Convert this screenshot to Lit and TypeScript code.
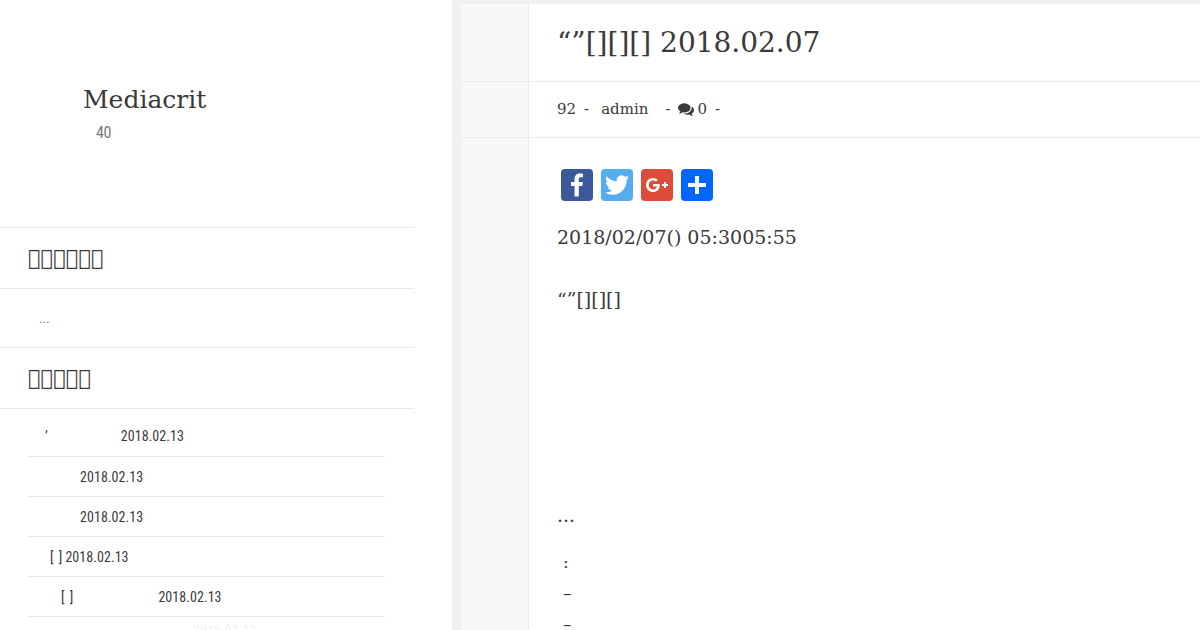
import { LitElement, html, css, svg } from "lit";
import { customElement } from "lit/decorators.js";

const TOFU = "\uE000";
const rows = [
  { pre: "’", gap: 17, date: 73 },
  { pre: "", gap: 52, date: 0 },
  { pre: "", gap: 52, date: 0 },
  { pre: "[ ]", gap: 22, date: 3 },
  { pre: "[ ]", gap: 33, date: 85 },
];
const shares = [
  { bg: "#3b5998", p: "M17.78 27.5V17.008h3.522l.527-4.09h-4.05v-2.61c0-1.182.33-1.99 2.023-1.99h2.166V4.66c-.375-.05-1.66-.16-3.155-.16-3.123 0-5.26 1.905-5.26 5.405v3.016h-3.53v4.09h3.53V27.5h4.223z" },
  { bg: "#55acee", p: "M28 8.557a9.913 9.913 0 0 1-2.828.775 4.93 4.93 0 0 0 2.166-2.725 9.738 9.738 0 0 1-3.13 1.194 4.92 4.92 0 0 0-3.593-1.55 4.924 4.924 0 0 0-4.794 6.049c-4.09-.21-7.72-2.17-10.15-5.15a4.942 4.942 0 0 0-.665 2.477c0 1.71.87 3.214 2.19 4.1a4.968 4.968 0 0 1-2.23-.616v.06c0 2.39 1.7 4.38 3.952 4.83-.414.115-.85.174-1.297.174-.318 0-.626-.03-.928-.086a4.935 4.935 0 0 0 4.6 3.42 9.893 9.893 0 0 1-6.114 2.107c-.398 0-.79-.023-1.175-.068a13.953 13.953 0 0 0 7.55 2.213c9.056 0 14.01-7.507 14.01-14.013 0-.213-.005-.426-.015-.637.96-.695 1.795-1.56 2.455-2.55z" },
  { bg: "#dd4b39", p: "M27 15h-2v-2h-2v2h-2v2h2v2h2v-2h2m-15-2v2.4h3.97c-.16 1.03-1.2 3.02-3.97 3.02-2.39 0-4.34-1.98-4.34-4.42s1.95-4.42 4.34-4.42c1.36 0 2.27.58 2.79 1.08l1.9-1.83C15.47 9.69 13.89 9 12 9c-3.87 0-7 3.13-7 7s3.13 7 7 7c4.04 0 6.72-2.84 6.72-6.84 0-.46-.05-.81-.11-1.16H12z" },
  { bg: "#0166ff", p: "M14 7h4v18h-4zM7 14h18v4H7z" },
];
const comments = "M1408 768q0 139-94 257t-256.5 186.5-353.5 68.5q-86 0-176-16-124 88-278 128-36 9-86 16h-3q-11 0-20.5-8t-11.5-21q-1-3-1-6.5t.5-6.5 2-6l2.5-5 3.5-5.5 4-5 4.5-5 4-4.5q5-6 23-25t26-29.5 22.5-29 25-38.5 20.5-44q-124-72-195-177t-71-224q0-139 94-257t256.5-186.5 353.5-68.5 353.5 68.5 256.5 186.5 94 257zm384 256q0 120-71 224.5t-195 176.5q10 24 20.5 44t25 38.5 22.5 29 26 29.5 23 25q1 1 4 4.5t4.5 5 4 5 3.5 5.5l2.5 5 2 6 .5 6.5-1 6.5q-3 14-13 22t-22 7q-50-7-86-16-154-40-278-128-90 16-176 16-271 0-472-132 58 4 88 4 161 0 309-45t264-129q125-92 192-212t67-254q0-77-23-152 129 71 204 178t75 230z";

@customElement("app-root")
export class AppRoot extends LitElement {
  static styles = css`
    :host { display: block; height: 630px; overflow: hidden; background: #f1f1f1;
      font-family: "DejaVu Serif", serif; color: #3a3a3a; }
    .page { display: grid; grid-template-columns: 452px 1fr; height: 630px; }
    .side { background: #fff; overflow: hidden; }
    .sideinner { width: 414px; }
    .brand { height: 228px; box-sizing: border-box; padding: 83px 0 0 83px; border-bottom: 1px solid #e8e8e8; }
    .brand h1 { margin: 0; font-size: 25px; line-height: 33px; font-weight: 400; color: #3a3a3a; }
    .brand p { margin: 0; padding: 7px 0 0 13px; font: 16px/20px "Roboto Condensed", "Liberation Sans Narrow", Roboto, sans-serif; letter-spacing: -.3px; color: #777; }
    .wtitle { height: 61px; box-sizing: border-box; margin: 0; padding-left: 28px; font-size: 21px; line-height: 60px; font-weight: 400; border-bottom: 1px solid #e8e8e8; }
    .teaser { height: 59px; box-sizing: border-box; padding: 21px 0 0 39px; font-size: 11px; line-height: 20px; color: #777; border-bottom: 1px solid #e8e8e8; }
    .list { padding: 8px 29px 0 28px; }
    .row { height: 40px; box-sizing: border-box; border-bottom: 1px solid #e8e8e8; font: 14px/39px "Roboto Condensed", "Liberation Sans Narrow", Roboto, sans-serif; letter-spacing: .05px; word-spacing: 2px; color: #3a3a3a; white-space: pre; }
    .row + .row { line-height: 41px; }
    .row + .row.ghost { color: #f0f0f0; border: 0; line-height: 28px; }
    .main { padding: 4px 0 0 9px; min-width: 0; }
    .mrow { display: flex; border-bottom: 1px solid #ececec; }
    .mrow.last { border: 0; }
    .gutter { width: 67px; flex: none; background: #f8f8f8; border-right: 1px solid #ececec; }
    .cell { flex: 1; background: #fff; padding-left: 28px; min-width: 0; }
    .title { height: 77px; box-sizing: border-box; }
    .title h2 { margin: 0; font-size: 28px; line-height: 77px; font-weight: 400; color: #3a3a3a; }
    .meta { height: 55px; box-sizing: border-box; padding-bottom: 2px; font-size: 15px; display: flex; align-items: center; }
    .dash { margin-left: 8px; }
    .author { margin-left: 12px; }
    .dash.far { margin-left: 17px; }
    .meta svg { width: 16px; height: 16px; fill: #3a3a3a; margin: 0 3px 0 8px; }
    .body { height: 492px; overflow: hidden; font-size: 19px; }
    .shares { display: flex; gap: 8px; padding: 31px 0 0 4px; }
    .shares div { width: 32px; height: 32px; border-radius: 4px; }
    .shares svg { display: block; width: 32px; height: 32px; fill: #fff; }
    .body p { margin: 0; line-height: 32px; }
    .p1 { padding-top: 20px; }
    .p2 { padding-top: 30px; }
    .p3 { padding-top: 184px; }
    .sm { font-size: 17px; padding-left: 6px; line-height: 31px !important; }
    .p4 { padding-top: 16px; }
  `;

  render() {
    return html`<div class="page">
      <aside class="side"><div class="sideinner">
        <div class="brand"><h1>Mediacrit</h1><p>40</p></div>
        <h3 class="wtitle">${TOFU.repeat(6)}</h3>
        <div class="teaser">...</div>
        <h3 class="wtitle">${TOFU.repeat(5)}</h3>
        <div class="list">
          ${rows.map((r) => html`<div class="row"><span style="margin-left:${r.gap}px">${r.pre}</span><span style="margin-left:${r.date}px">2018.02.13</span></div>`)}
          <div class="row ghost"><span style="margin-left:165px">2018.02.13</span></div>
        </div>
      </div></aside>
      <main class="main">
        <div class="mrow"><div class="gutter"></div><div class="cell title"><h2>“”[][][] 2018.02.07</h2></div></div>
        <div class="mrow"><div class="gutter"></div><div class="cell meta"><span>92</span><span class="dash">-</span><span class="author">admin</span><span class="dash far">-</span><svg viewBox="0 0 1792 1792">${svg`<path d=${comments}></path>`}</svg><span>0</span><span class="dash">-</span></div></div>
        <div class="mrow last"><div class="gutter"></div><div class="cell body">
          <div class="shares">${shares.map((s) => html`<div style="background:${s.bg}"><svg viewBox="0 0 32 32">${svg`<path d=${s.p}></path>`}</svg></div>`)}</div>
          <p class="p1">2018/02/07() 05:3005:55</p>
          <p class="p2">“”[][][]</p>
          <p class="p3">...</p>
          <p class="sm p4">:</p>
          <p class="sm">–</p>
          <p class="sm">–</p>
        </div></div>
      </main>
    </div>`;
  }
}
